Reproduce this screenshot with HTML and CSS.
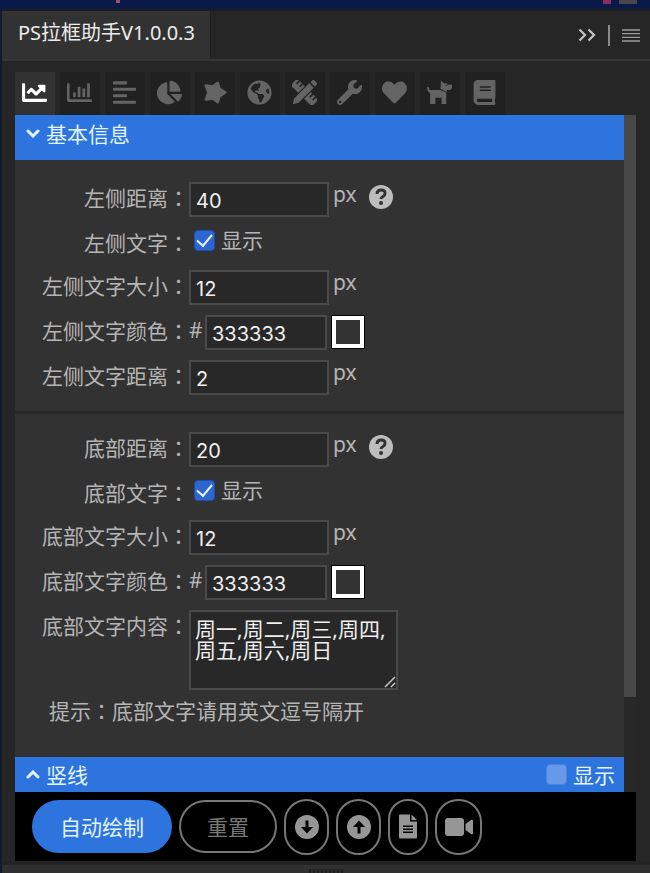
FILE: index.html
```html
<!DOCTYPE html>
<html lang="zh-CN">
<head>
<meta charset="utf-8">
<meta name="viewport" content="width=device-width, initial-scale=1">
<title>PS拉框助手</title>
<link rel="stylesheet" href="styles.css">
</head>
<body>
<div class="backdrop"></div>
<main class="window">
  <header class="titlebar">
    <h1 class="title">PS拉框助手V1.0.0.3</h1>
    <div class="window-tools">
      <button class="plain" type="button" aria-label="折叠"><svg width="18" height="14" viewBox="0 0 18 14" fill="none" stroke="#c4c4c4" stroke-width="2.200"><path d="M1.500 1.500 7 7l-5.500 5.500M10.500 1.500 16 7l-5.500 5.500"/></svg></button>
      <span class="divider"></span>
      <button class="plain" type="button" aria-label="菜单"><svg width="18" height="13" viewBox="0 0 18 13" fill="none" stroke="#9c9c9c" stroke-width="1.300"><path d="M0 1h18M0 4.600h18M0 8.300h18M0 12h18"/></svg></button>
    </div>
  </header>

  <section class="panel">
    <nav class="tabs">
      <button class="tab active" type="button" aria-label="折线"><svg viewBox="0 0 512 512"><path d="M496 384H64V80c0-8.840-7.160-16-16-16H16C7.160 64 0 71.160 0 80v336c0 17.670 14.330 32 32 32h464c8.840 0 16-7.160 16-16v-32c0-8.840-7.160-16-16-16zM464 96H345.940c-21.380 0-32.090 25.850-16.970 40.970l32.400 32.400L288 242.750l-73.370-73.370c-12.500-12.500-32.760-12.500-45.250 0l-68.690 68.690c-6.250 6.250-6.250 16.380 0 22.630l22.620 22.620c6.250 6.250 16.380 6.250 22.630 0L192 237.250l73.370 73.370c12.500 12.500 32.760 12.500 45.250 0l96-96 32.400 32.400c15.120 15.120 40.970 4.410 40.970-16.970V112c.01-8.840-7.150-16-15.990-16z"/></svg></button>
      <button class="tab" type="button" aria-label="柱形"><svg viewBox="0 0 512 512"><path d="M496 396H52V80q0-16-16-16H16Q0 64 0 80v336q0 32 32 32h464q16 0 16-16v-20q0-16-16-16z"/><path d="M124 256h56v96h-56zM220 136h56v216h-56zM316 176h56v176h-56zM412 72h56v280h-56z"/></svg></button>
      <button class="tab" type="button" aria-label="对齐"><svg viewBox="0 0 512 512"><path d="M32 28h260q16 0 16 16v30q0 16-16 16H32q-12 0-12-16V44q0-16 12-16zM32 160h444q16 0 16 16v30q0 16-16 16H32q-12 0-12-16v-30q0-16 12-16zM32 292h260q16 0 16 16v30q0 16-16 16H32q-12 0-12-16v-30q0-16 12-16zM32 424h444q16 0 16 16v30q0 16-16 16H32q-12 0-12-16v-30q0-16 12-16z"/></svg></button>
      <button class="tab" type="button" aria-label="饼图"><svg viewBox="0 0 544 512"><path d="M527.790 288H290.500l158.030 158.030c6.040 6.040 15.980 6.530 22.190.68 38.700-36.460 65.320-85.610 73.130-140.860 1.340-9.460-6.510-17.850-16.060-17.850zm-15.830-64.800C503.720 103.740 408.260 8.280 288.800.04 279.680-.59 272 7.100 272 16.240V240h223.770c9.140 0 16.820-7.680 16.190-16.800zM224 288V50.710c0-9.550-8.390-17.400-17.840-16.060C86.990 51.490-4.100 155.600.14 280.370 4.500 408.510 114.830 513.590 243.030 511.980c50.400-.63 96.970-16.870 135.260-44.030 7.900-5.600 8.420-17.230 1.570-24.080L224 288z"/></svg></button>
      <button class="tab" type="button" aria-label="形状"><svg viewBox="0 0 24 24"><path d="M22 12 16.500 15.500 15 21 10.500 17.500 4 18.500 6.500 12 4 5.500 10.500 6.500 15 3 16.500 8.500z" stroke="currentColor" stroke-width="3" stroke-linejoin="round"/></svg></button>
      <button class="tab" type="button" aria-label="地球"><svg viewBox="0 0 496 512"><path d="M248 8C111.030 8 0 119.030 0 256s111.030 248 248 248 248-111.030 248-248S384.970 8 248 8zm82.290 357.600c-3.900 3.880-7.990 7.950-11.310 11.280-2.990 3-5.100 6.700-6.170 10.710-1.510 5.660-2.730 11.380-4.770 16.870l-17.390 46.850c-13.760 3-28 4.690-42.650 4.690v-27.380c1.690-12.620-7.640-36.260-22.630-51.250-6-6-9.370-14.140-9.370-22.630v-32.010c0-11.640-6.270-22.340-16.460-27.970-14.370-7.950-34.810-19.060-48.810-26.110-11.480-5.780-22.100-13.140-31.650-21.750l-.8-.72a114.792 114.792 0 0 1-18.060-20.740c-9.380-13.770-24.660-36.420-34.590-51.140 20.470-45.500 57.360-82.040 103.200-101.890l24.010 12.010C203.480 89.740 216 82.010 216 70.110v-11.300c7.990-1.290 16.120-2.110 24.390-2.420l28.300 28.300c6.250 6.250 6.250 16.380 0 22.630L264 112l-10.340 10.340c-3.120 3.120-3.120 8.190 0 11.310l4.690 4.690c3.120 3.120 3.120 8.190 0 11.310l-8 8a8 8 0 0 1-5.660 2.340h-8.990c-2.080 0-4.080.81-5.580 2.270l-9.920 9.650a8 8 0 0 0-1.580 9.310l15.590 31.190c2.660 5.320-1.210 11.580-7.150 11.580h-5.640c-1.930 0-3.790-.7-5.240-1.960l-9.280-8.060a16 16 0 0 0-15.550-3.100l-31.170 10.390a12 12 0 0 0-8.170 11.340c0 4.530 2.560 8.660 6.610 10.690l11.080 5.540c9.410 4.710 19.790 7.160 30.310 7.160s22.590 27.290 32 32h66.750c8.490 0 16.620 3.370 22.630 9.370l13.690 13.690a30.500 30.500 0 0 1 8.930 21.570 46.500 46.500 0 0 1-13.720 32.980zM417 274.250c-5.790-1.450-10.840-5-14.150-9.970l-17.980-26.970a24 24 0 0 1 0-26.620l19.590-29.380c2.320-3.470 5.500-6.290 9.240-8.150l12.980-6.490C440.200 193.590 448 223.870 448 256c0 8.670-.74 17.160-1.820 25.540L417 274.250z"/></svg></button>
      <button class="tab" type="button" aria-label="绘图"><svg viewBox="0 0 24 24"><path transform="rotate(45 12 12)" d="M-2.500 7.500H0v4h1.500v-4H4v4h1.500v-4H8v9H-2.500zM16 7.500h2v4h1.500v-4H22v4h1.500v-4h3v9H16z"/><path transform="rotate(-45 12 12)" d="M1 9h20.500v6H1l-5-3zM23 9h2q2 0 2 2v2q0 2-2 2h-2z"/></svg></button>
      <button class="tab" type="button" aria-label="工具"><svg viewBox="0 0 512 512"><path fill-rule="evenodd" d="M507.730 109.100c-2.240-9.030-13.540-12.090-20.120-5.510l-74.360 74.360-67.880-11.310-11.310-67.880 74.360-74.360c6.620-6.620 3.430-17.900-5.660-20.160-47.380-11.740-99.550.91-136.580 37.930-39.640 39.640-50.550 97.100-34.050 147.200L18.740 402.760c-24.990 24.990-24.990 65.510 0 90.500 24.990 24.990 65.510 24.990 90.500 0l213.210-213.210c50.120 16.710 107.470 5.680 147.370-34.220 37.070-37.070 49.700-89.320 37.910-136.730zM64 472a24 24 0 1 1 0-48 24 24 0 0 1 0 48z"/></svg></button>
      <button class="tab" type="button" aria-label="收藏"><svg viewBox="0 0 512 512"><path d="M462.300 62.600C407.500 15.900 326 24.300 275.700 76.200L256 96.500l-19.700-20.300C186.100 24.300 104.500 15.900 49.700 62.600c-62.800 53.600-66.100 149.800-9.900 207.900l193.500 199.800c12.500 12.900 32.800 12.900 45.300 0l193.500-199.800c56.300-58.100 53-154.300-9.800-207.900z"/></svg></button>
      <button class="tab" type="button" aria-label="宠物"><svg viewBox="0 0 24 24"><path fill-rule="evenodd" d="M13.500.5 16 3h3l1 1.500h4v2q0 3-3 3h-2v2L13 8.500zM18 4.500v1.300h1.300V4.500zM0 6.500q2-.5 2.500 3H13l5.500 2.500V23H14v-6H8v6H3V12.500Q0 11.500 0 6.500z"/></svg></button>
      <button class="tab" type="button" aria-label="说明"><svg viewBox="0 0 448 512"><path d="M448 360V24c0-13.300-10.700-24-24-24H96C43 0 0 43 0 96v320c0 53 43 96 96 96h328c13.300 0 24-10.700 24-24v-16c0-7.500-3.500-14.300-8.900-18.700-4.200-15.400-4.200-59.300 0-74.700 5.400-4.300 8.900-11.100 8.900-18.600zM128 134c0-3.300 2.700-6 6-6h212c3.300 0 6 2.700 6 6v20c0 3.300-2.700 6-6 6H134c-3.300 0-6-2.700-6-6v-20zm0 64c0-3.300 2.700-6 6-6h212c3.300 0 6 2.700 6 6v20c0 3.300-2.700 6-6 6H134c-3.300 0-6-2.700-6-6v-20zm253.400 250H96c-17.700 0-32-14.300-32-32 0-17.600 14.400-32 32-32h285.400c-1.900 17.100-1.900 46.900 0 64z"/></svg></button>
    </nav>

    <div class="scroller">
      <div class="content">
        <h2 class="bar bar-open"><button class="bar-toggle" type="button"><svg class="chevron" viewBox="0 0 14 9"><path d="m2 2 5 5 5-5"/></svg>基本信息</button></h2>
        <form class="fields">
          <div class="row">
            <label class="name" for="left-gap">左侧距离<span class="colon" lang="zh-TW">：</span></label>
            <input class="box" id="left-gap" type="text" value="40"><span class="unit">px</span>
            <button class="help" type="button" aria-label="帮助"><svg viewBox="0 0 24 24"><circle cx="12" cy="12" r="12" fill="#bdbdbd"/><path d="M8 9q0-4 4.200-4T16 8.500q0 2-2 3t-2 2.500" fill="none" stroke="#323232" stroke-width="3"/><circle cx="12" cy="18" r="2" fill="#323232"/></svg></button>
          </div>
          <div class="row short">
            <span class="name">左侧文字<span class="colon" lang="zh-TW">：</span></span>
            <label class="check"><input type="checkbox" checked>显示</label>
          </div>
          <div class="row">
            <label class="name" for="left-size">左侧文字大小<span class="colon" lang="zh-TW">：</span></label>
            <input class="box" id="left-size" type="text" value="12"><span class="unit">px</span>
          </div>
          <div class="row">
            <label class="name" for="left-color">左侧文字颜色<span class="colon" lang="zh-TW">：</span></label>
            <span class="hash">#</span><input class="box color" id="left-color" type="text" value="333333"><button class="swatch" type="button" aria-label="选择颜色"></button>
          </div>
          <div class="row">
            <label class="name" for="left-text-gap">左侧文字距离<span class="colon" lang="zh-TW">：</span></label>
            <input class="box" id="left-text-gap" type="text" value="2"><span class="unit">px</span>
          </div>
          <hr class="rule">
          <div class="row">
            <label class="name" for="bottom-gap">底部距离<span class="colon" lang="zh-TW">：</span></label>
            <input class="box" id="bottom-gap" type="text" value="20"><span class="unit">px</span>
            <button class="help" type="button" aria-label="帮助"><svg viewBox="0 0 24 24"><circle cx="12" cy="12" r="12" fill="#bdbdbd"/><path d="M8 9q0-4 4.200-4T16 8.500q0 2-2 3t-2 2.500" fill="none" stroke="#323232" stroke-width="3"/><circle cx="12" cy="18" r="2" fill="#323232"/></svg></button>
          </div>
          <div class="row short">
            <span class="name">底部文字<span class="colon" lang="zh-TW">：</span></span>
            <label class="check"><input type="checkbox" checked>显示</label>
          </div>
          <div class="row">
            <label class="name" for="bottom-size">底部文字大小<span class="colon" lang="zh-TW">：</span></label>
            <input class="box" id="bottom-size" type="text" value="12"><span class="unit">px</span>
          </div>
          <div class="row">
            <label class="name" for="bottom-color">底部文字颜色<span class="colon" lang="zh-TW">：</span></label>
            <span class="hash">#</span><input class="box color" id="bottom-color" type="text" value="333333"><button class="swatch" type="button" aria-label="选择颜色"></button>
          </div>
          <div class="row tall">
            <label class="name" for="bottom-text">底部文字内容<span class="colon" lang="zh-TW">：</span></label>
            <div class="area-wrap"><textarea class="area" id="bottom-text">周一,周二,周三,周四,周五,周六,周日</textarea><svg class="grip" viewBox="0 0 12 12"><path d="M1 11 11 1M7 11l4-4"/></svg></div>
          </div>
          <p class="hint">提示<span class="colon" lang="zh-TW">：</span>底部文字请用英文逗号隔开</p>
        </form>
        <div class="bar bar-closed">
          <button class="bar-toggle" type="button"><svg class="chevron" viewBox="0 0 14 9"><path d="m2 7 5-5 5 5"/></svg>竖线</button>
          <label class="check light"><input type="checkbox">显示</label>
        </div>
      </div>
      <div class="track"><div class="thumb"></div></div>
    </div>

    <footer class="actions">
      <button class="pill primary" type="button">自动绘制</button>
      <button class="pill reset" type="button">重置</button>
      <button class="pill icon" type="button" aria-label="下载"><svg viewBox="0 0 24 24"><path fill-rule="evenodd" d="M12 0a12 12 0 1 0 0 24 12 12 0 0 0 0-24zm-1.500 5.500h3v6.500H18l-6 6.500L6 12h4.500z"/></svg></button>
      <button class="pill icon" type="button" aria-label="上传"><svg viewBox="0 0 24 24"><path fill-rule="evenodd" d="M12 0a12 12 0 1 0 0 24 12 12 0 0 0 0-24zm-1.500 18.500h3V12H18l-6-6.500L6 12h4.500z"/></svg></button>
      <button class="pill icon doc" type="button" aria-label="文档"><svg viewBox="0 0 18 24"><path fill-rule="evenodd" d="M1 0h10v7h7v16q0 1-1 1H1q-1 0-1-1V1q0-1 1-1zm3 11v1.500h10V11zm0 3v1.500h10V14zm0 3v1.500h10V17zM12.500 0l5.500 5.500h-5.500z"/></svg></button>
      <button class="pill icon video" type="button" aria-label="视频"><svg viewBox="0 0 28 20"><path d="M3 1h13q3 0 3 3v12q0 3-3 3H3q-3 0-3-3V4q0-3 3-3zM20.500 7l5.500-4q2-1 2 1v12q0 2-2 1l-5.500-4z"/></svg></button>
    </footer>
  </section>
  <div class="resize-bar"><span class="ridges"></span></div>
</main>
</body>
</html>
```
FILE: styles.css
```css
* { box-sizing: border-box; }

body {
  margin: 0;
  min-height: 100vh;
  display: flex;
  flex-direction: column;
  background: #262626;
  color: #b5b5b5;
  font: 21px/32px "Noto Sans", "Noto Sans CJK SC", sans-serif;
}

button, input, textarea { font: inherit; color: inherit; margin: 0; }
button { padding: 0; border: 0; background: none; cursor: pointer; }
svg { display: block; }
h1, h2, p { margin: 0; font-weight: 400; }

/* Strip of the desktop that shows above the panel window */
.backdrop {
  height: 9px;
  background:
    linear-gradient(#a04f62, #a04f62) 18% 0 / 4px 3px no-repeat,
    linear-gradient(#8c2f5c, #8c2f5c) 94% 0 / 8px 4px no-repeat,
    linear-gradient(#484848, #484848) 98% 0 / 18px 4px no-repeat,
    #08194a;
}

.window {
  flex: 1;
  display: flex;
  flex-direction: column;
  border-left: 2px solid #101c2c;
}

.titlebar {
  display: flex;
  justify-content: space-between;
  height: 52px;
  border-top: 2px solid #1d1d1d;
  border-bottom: 2px solid #363636;
}

.title {
  padding: 6px 15px 6px 16px;
  background: #323232;
  border-right: 1px solid #1c1c1c;
  color: #ececec;
  font-size: 20px;
}

.window-tools {
  display: flex;
  align-items: center;
  gap: 12px;
  padding-right: 10px;
}

.divider { width: 2px; height: 21px; background: #8a8a8a; }

.panel {
  flex: 1;
  display: flex;
  flex-direction: column;
  padding: 0 14px 0 13px;
}

.tabs { display: flex; gap: 5px; padding-top: 11px; }

.tab {
  display: grid;
  place-items: center;
  width: 40px;
  height: 43px;
  padding: 0 2px 2px 0;
  background: #212121;
  color: #646464;
}
.tab.active { background: #323232; color: #fff; }
.tab svg { width: 25px; height: 25px; fill: currentColor; }

.scroller { display: flex; }
.content { flex: 1; background: #323232; }
.track { width: 12px; background: #282828; }
.thumb { height: 86%; background: #484848; }

.bar {
  display: flex;
  align-items: center;
  justify-content: space-between;
  padding: 0 9px 0 11px;
  background: #2d74de;
  color: #e2f4ff;
  font-size: 21px;
}
.bar-open { height: 45px; padding-bottom: 8px; }
.bar-closed { height: 35px; }
.bar-toggle { display: flex; align-items: center; gap: 6px; }
.chevron { width: 14px; height: 9px; fill: none; stroke: #e2f4ff; stroke-width: 3; stroke-linecap: round; }

.fields { padding: 17px 0 30px; }

.row { display: flex; align-items: flex-start; height: 45px; padding-top: 5px; }
.row.short { height: 43px; }
.row.tall { height: 89px; }

.name { width: 174px; text-align: right; white-space: nowrap; line-height: 30px; }
.colon { font-family: "Noto Sans CJK TC", sans-serif; }

.box {
  width: 140px;
  height: 35px;
  padding: 3px 5px 0;
  border: 2px solid #4a4a4a;
  border-radius: 0;
  background: #282828;
  color: #efefef;
  font-family: Inter, sans-serif;
  font-size: 20px;
}
.box.color { width: 122px; }
.hash { width: 16px; line-height: 30px; }
.unit { padding-left: 4px; line-height: 24px; }

.help { width: 24px; height: 24px; margin: 3px 0 0 12px; }

.check { display: flex; align-items: center; gap: 6px; padding-left: 5px; line-height: 26px; }
.check input {
  appearance: none;
  width: 21px;
  height: 21px;
  border: 1px solid #1b4fb0;
  border-radius: 4px;
  background: #2d66cf;
  display: grid;
  place-items: center;
}
.check input:checked::after {
  content: "";
  width: 7px;
  height: 13px;
  margin-bottom: 3px;
  border: solid #e8f2ff;
  border-width: 0 2px 2px 0;
  transform: rotate(40deg);
}
.check.light input { border-color: #4a82df; background: #6799e8; }

.swatch {
  width: 34px;
  height: 34px;
  margin-left: 4px;
  border: 1px solid #000;
  background: #333;
  box-shadow: inset 0 0 0 4px #fff;
}

.area-wrap { position: relative; }
.area {
  display: block;
  width: 209px;
  height: 80px;
  padding: 7px 4px;
  border: 2px solid #4a4a4a;
  background: #282828;
  color: #efefef;
  line-height: 21px;
  resize: none;
  overflow: hidden;
}
.grip { position: absolute; right: 2px; bottom: 2px; width: 12px; height: 12px; fill: none; stroke: #c8c8c8; stroke-width: 1.5; }

.rule { height: 3px; margin: 11px 0 13px; border: 0; background: #282828; }
.hint { padding-left: 34px; }

.actions {
  flex: 1;
  display: flex;
  align-items: center;
  gap: 7px;
  padding: 0 17px;
  min-height: 69px;
  background: #000;
}

.pill {
  height: 53px;
  border: 2px solid #777;
  border-radius: 27px;
  color: #777;
}
.pill.primary { width: 140px; border-color: #2d74de; background: #2d74de; color: #e2f4ff; }
.pill.reset { width: 98px; }
.pill.icon { display: grid; place-items: center; width: 45px; height: 56px; border-radius: 23px; }
.pill.doc { width: 40px; border-radius: 20px; }
.pill.video { width: 47px; }
.pill svg { width: 24px; height: 24px; fill: #969696; }
.pill.doc svg { width: 18px; height: 25px; }
.pill.video svg { width: 28px; height: 20px; }

.resize-bar {
  display: flex;
  justify-content: center;
  height: 12px;
  padding-top: 4px;
  background: #303030;
  border-top: 4px solid #232323;
}
.ridges { width: 34px; background: repeating-linear-gradient(90deg, #1d1d1d 0 2px, #303030 2px 4px); }
```
